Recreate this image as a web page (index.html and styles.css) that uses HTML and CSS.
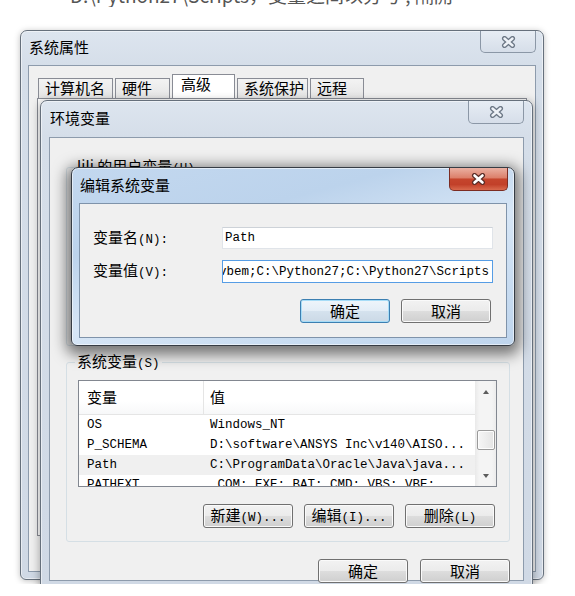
FILE: index.html
```html
<!DOCTYPE html>
<html lang="zh-CN">

<head>
    <meta charset="UTF-8">
    <meta name="viewport" content="width=device-width, initial-scale=1.0">
    <title>编辑系统变量</title>
    <link rel="stylesheet" href="styles.css">
</head>

<body>

    <div class="desktop">
        <div class="article-line"><span>D:\Python27\Scripts，变量之间以分号 ; 隔開</span></div>

        <!-- 系统属性 -->
        <div class="window win-props">
            <div class="titlebar">
                <span>系统属性</span>
                <span class="close">
                    <svg width="15" height="12" viewBox="0 0 15 12"><path d="M3.5 2.5 L11.5 9.5 M11.5 2.5 L3.5 9.5" fill="none" stroke="#6c7785" stroke-width="5" stroke-linecap="round"/><path d="M3.5 2.5 L11.5 9.5 M11.5 2.5 L3.5 9.5" fill="none" stroke="#eef2f7" stroke-width="2.4" stroke-linecap="round"/></svg>
                </span>
            </div>
            <div class="client">
                <div class="tabs">
                    <div class="tab">计算机名</div>
                    <div class="tab">硬件</div>
                    <div class="tab selected">高级</div>
                    <div class="tab">系统保护</div>
                    <div class="tab">远程</div>
                </div>
                <div class="tab-panel"></div>
            </div>
        </div>

        <!-- 环境变量 -->
        <div class="window win-env">
            <div class="titlebar">
                <span>环境变量</span>
                <span class="close">
                    <svg width="15" height="12" viewBox="0 0 15 12"><path d="M3.5 2.5 L11.5 9.5 M11.5 2.5 L3.5 9.5" fill="none" stroke="#6c7785" stroke-width="5" stroke-linecap="round"/><path d="M3.5 2.5 L11.5 9.5 M11.5 2.5 L3.5 9.5" fill="none" stroke="#eef2f7" stroke-width="2.4" stroke-linecap="round"/></svg>
                </span>
            </div>
            <div class="client">
                <fieldset class="group user-group">
                    <legend>lili 的用户变量<span class="m">(U)</span></legend>
                </fieldset>
                <fieldset class="group sys-group">
                    <legend>系统变量<span class="m">(S)</span></legend>
                    <div class="listview">
                        <div class="list-main">
                            <div class="list-head">
                                <div class="col-name">变量</div>
                                <div class="col-value">值</div>
                            </div>
                            <div class="list-row">
                                <div class="col-name">OS</div>
                                <div class="col-value">Windows_NT</div>
                            </div>
                            <div class="list-row">
                                <div class="col-name">P_SCHEMA</div>
                                <div class="col-value">D:\software\ANSYS Inc\v140\AISO...</div>
                            </div>
                            <div class="list-row selected">
                                <div class="col-name">Path</div>
                                <div class="col-value">C:\ProgramData\Oracle\Java\java...</div>
                            </div>
                            <div class="list-row">
                                <div class="col-name">PATHEXT</div>
                                <div class="col-value">.COM;.EXE;.BAT;.CMD;.VBS;.VBE;</div>
                            </div>
                        </div>
                        <div class="scrollbar">
                            <div class="sb-btn"><span class="arrow-up"></span></div>
                            <div class="sb-thumb"></div>
                            <div class="sb-btn sb-down"><span class="arrow-down"></span></div>
                        </div>
                    </div>
                    <div class="button-row group-buttons">
                        <button class="btn">新建<span class="m">(W)...</span></button>
                        <button class="btn">编辑<span class="m">(I)...</span></button>
                        <button class="btn">删除<span class="m">(L)</span></button>
                    </div>
                </fieldset>
                <div class="button-row env-buttons">
                    <button class="btn">确定</button>
                    <button class="btn">取消</button>
                </div>
            </div>
        </div>

        <!-- 编辑系统变量 -->
        <div class="window win-edit">
            <div class="titlebar">
                <span>编辑系统变量</span>
                <span class="close close-active">
                    <svg width="15" height="12" viewBox="0 0 15 12"><path d="M3.5 2.5 L11.5 9.5 M11.5 2.5 L3.5 9.5" fill="none" stroke="#5b2d27" stroke-width="5" stroke-linecap="round"/><path d="M3.5 2.5 L11.5 9.5 M11.5 2.5 L3.5 9.5" fill="none" stroke="#ffffff" stroke-width="2.6" stroke-linecap="round"/></svg>
                </span>
            </div>
            <div class="client">
                <div class="form">
                    <div class="label">变量名<span class="m">(N):</span></div>
                    <div class="textbox">Path</div>
                    <div class="label">变量值<span class="m">(V):</span></div>
                    <div class="textbox focused"><span>vbem;C:\Python27;C:\Python27\Scripts</span></div>
                </div>
                <div class="button-row edit-buttons">
                    <button class="btn default">确定</button>
                    <button class="btn">取消</button>
                </div>
            </div>
        </div>
    </div>

</body>

</html>
```

FILE: styles.css
```css
body {
    margin: 0;
    background: #fff;
    font-family: "Noto Sans CJK SC", sans-serif;
    color: #000;
}

.m {
    font-family: "Liberation Mono", monospace;
    font-size: 12.5px;
}

.desktop {
    position: relative;
    width: 575px;
    height: 584px;
    overflow: hidden;
}

.article-line {
    height: 7px;
    overflow: hidden;
    padding-left: 70px;
    color: #555;
    font-size: 19px;
    line-height: 22px;
    white-space: nowrap;
}

.article-line span {
    display: block;
    margin-top: -16px;
}

/* window frames */
.window {
    position: absolute;
    box-sizing: border-box;
    display: flex;
    flex-direction: column;
    padding: 0 7px 7px;
    border: 1px solid #66707c;
    border-radius: 7px 7px 6px 6px;
    background: linear-gradient(#dde5ef, #d5dee9 36px, #d0d9e5);
    box-shadow: inset 0 0 0 1px rgba(255, 255, 255, 0.5), 0 1px 6px rgba(0, 0, 0, 0.25);
}

.win-props {
    left: 20px;
    top: 30px;
    width: 524px;
    height: 550px;
}

.win-env {
    left: 40px;
    top: 100px;
    width: 493px;
    height: 490px;
    padding: 0 8px 8px;
    box-shadow: inset 0 0 0 1px rgba(255, 255, 255, 0.5), 0 2px 8px 1px rgba(0, 0, 0, 0.3);
}

.win-edit {
    left: 71px;
    top: 167px;
    width: 444px;
    height: 179px;
    border-color: #363c44;
    background: linear-gradient(165deg, #c3d8ef 0%, #bcd3ec 30%, #d7e6f6 55%, #c8dcf1 80%, #bfd5ed 100%);
    box-shadow: inset 0 0 0 1px rgba(255, 255, 255, 0.55), 0 4px 14px 5px rgba(0, 0, 0, 0.5);
}

.titlebar {
    position: relative;
    flex: none;
    box-sizing: border-box;
    display: flex;
    align-items: center;
    padding: 0 0 4px 1px;
    font-size: 15px;
}

.win-props .titlebar {
    height: 34px;
}

.win-env .titlebar {
    height: 36px;
}

.win-edit .titlebar {
    height: 35px;
    padding-bottom: 2px;
}

.close {
    position: absolute;
    top: 0;
    right: 0;
    box-sizing: border-box;
    width: 56px;
    height: 22px;
    display: flex;
    align-items: center;
    justify-content: center;
    border: 1px solid #8b97a6;
    border-top: none;
    border-radius: 0 0 5px 5px;
    background: linear-gradient(#e7edf4, #d6dee9);
}

.win-env .close {
    height: 23px;
}

.close-active {
    right: -1px;
    width: 59px;
    height: 23px;
    border-color: #7c2c22;
    background: linear-gradient(#eab0a2 0%, #dc7f6a 45%, #c5452d 50%, #c24029 75%, #d96a4e 100%);
}

.client {
    flex: 1;
    min-height: 0;
    display: flex;
    flex-direction: column;
    background: #f0f0f0;
    border: 1px solid #8d9bac;
}

.client > * {
    flex-shrink: 0;
}

.win-edit .client {
    border-color: #7f93aa;
}

/* tabs */
.tabs {
    display: grid;
    grid-template-columns: 77px 57px 65px 73px 56px;
    align-items: end;
    height: 25px;
    margin: 8px 0 0 9px;
}

.tab {
    box-sizing: border-box;
    height: 22px;
    margin-right: 2px;
    padding-left: 6px;
    border: 1px solid #898c95;
    border-bottom: none;
    background: linear-gradient(#f3f3f3, #e3e3e3);
    font-size: 15px;
    line-height: 17px;
}

.tab.selected {
    height: 26px;
    padding-left: 8px;
    background: #fff;
    line-height: 17px;
}

.tab-panel {
    height: 436px;
    margin: -1px 8px 0 8px;
    border: 1px solid #898c95;
    background: #fcfcfc;
}

/* group boxes */
.group {
    margin: 0;
    padding: 0 12px 13px 11px;
    border: 1px solid #d5dfe5;
    border-radius: 3px;
    min-width: 0;
}

.group legend {
    margin-left: -3px;
    padding: 0 2px;
    font-size: 15px;
    line-height: 17px;
}

.user-group {
    box-sizing: border-box;
    height: 189px;
    margin: 19px 13px 0 16px;
}

.sys-group {
    margin: 6px 13px 0 16px;
}

/* list view */
.listview {
    display: flex;
    box-sizing: border-box;
    height: 107px;
    margin-top: 7px;
    border: 1px solid #828790;
    background: #fff;
    overflow: hidden;
}

.list-main {
    flex: 1;
    min-width: 0;
}

.list-head {
    display: flex;
    box-sizing: border-box;
    height: 34px;
    border-bottom: 1px solid #e5e5e5;
    background: linear-gradient(#fff 60%, #f7f8f9);
    font-size: 15px;
    line-height: 31px;
}

.col-name {
    flex: none;
    box-sizing: border-box;
    width: 125px;
    padding-left: 8px;
}

.list-head .col-name {
    border-right: 1px solid #e5e5e5;
}

.col-value {
    padding-left: 6px;
}

.list-row {
    display: flex;
    height: 20px;
    font-family: "Liberation Mono", monospace;
    font-size: 12.5px;
    line-height: 20px;
    white-space: nowrap;
}

.list-row.selected {
    background: #f0f0f0;
}

.scrollbar {
    flex: none;
    width: 21px;
    display: flex;
    flex-direction: column;
    align-items: center;
    background: linear-gradient(to right, #e9e9e9, #f4f4f4 20%, #f4f4f4 80%, #ececec);
}

.sb-btn {
    width: 100%;
    height: 21px;
    display: flex;
    align-items: center;
    justify-content: center;
}

.sb-down {
    margin-top: auto;
}

.arrow-up,
.arrow-down {
    width: 0;
    height: 0;
    border-left: 3.5px solid transparent;
    border-right: 3.5px solid transparent;
}

.arrow-up {
    border-bottom: 4px solid #5c5c5c;
}

.arrow-down {
    border-top: 4px solid #5c5c5c;
}

.sb-thumb {
    box-sizing: border-box;
    width: 18px;
    height: 20px;
    margin-top: 28px;
    border: 1px solid #9a9a9a;
    border-radius: 2px;
    background: linear-gradient(to right, #f6f6f6, #e4e4e4);
    box-shadow: inset 0 0 0 1px #fdfdfd;
}

/* buttons */
.button-row {
    display: flex;
    justify-content: flex-end;
}

.group-buttons {
    gap: 11px;
    margin-top: 17px;
    padding-right: 2px;
}

.env-buttons {
    gap: 12px;
    margin: 17px 13px 0 0;
}

.edit-buttons {
    gap: 11px;
    margin-top: 16px;
    padding-right: 15px;
}

.btn {
    box-sizing: border-box;
    width: 90px;
    height: 24px;
    padding: 0;
    border: 1px solid #707070;
    border-radius: 3px;
    background: linear-gradient(#f2f2f2 0%, #ebebeb 50%, #dddddd 51%, #cfcfcf 100%);
    box-shadow: inset 0 0 0 1px #fafafa;
    font-family: "Noto Sans CJK SC", sans-serif;
    font-size: 15px;
    line-height: 20px;
    color: #000;
}

.btn.default {
    border-color: #3c7fb1;
    background: linear-gradient(#eef5fb 0%, #e3edf6 50%, #d5e2ee 51%, #cbd9e6 100%);
    box-shadow: inset 0 0 0 1px #a6dcf7;
}

/* edit form */
.form {
    display: grid;
    grid-template-columns: 129px 271px;
    grid-template-rows: 22px 23px;
    row-gap: 11px;
    align-items: center;
    padding: 23px 0 0 13px;
}

.label {
    font-size: 15px;
    line-height: 17px;
}

.textbox {
    box-sizing: border-box;
    height: 100%;
    display: flex;
    align-items: center;
    padding: 0 3px 0 2px;
    overflow: hidden;
    border: 1px solid #e0e4e9;
    border-top-color: #cdd2d8;
    background: #fff;
    font-family: "Liberation Mono", monospace;
    font-size: 12.5px;
    white-space: nowrap;
}

.textbox.focused {
    justify-content: flex-end;
    border-color: #569de5;
}
```
